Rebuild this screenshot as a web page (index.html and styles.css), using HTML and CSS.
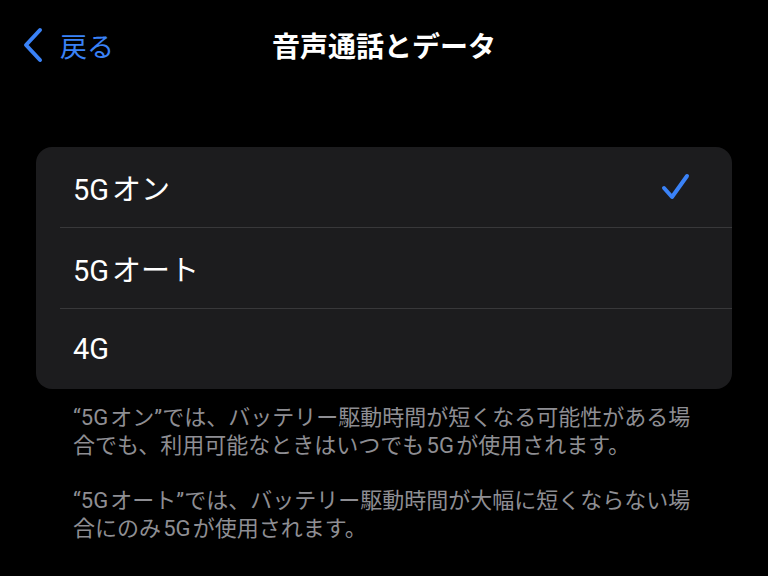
FILE: index.html
```html
<!DOCTYPE html>
<html lang="ja">
<head>
<meta charset="utf-8">
<title>音声通話とデータ</title>
<link rel="stylesheet" href="styles.css">
</head>
<body>
<header class="nav">
  <div class="back">
    <svg class="chev" width="22" height="36" viewBox="0 0 22 36"><path d="M18 3 L4 18 L18 33" fill="none" stroke="#3a82f7" stroke-width="4" stroke-linecap="round" stroke-linejoin="round"/></svg>
    <span class="back-label">戻る</span>
  </div>
  <h1 class="title">音声通話とデータ</h1>
  <div></div>
</header>
<main class="content">
  <section class="card">
    <div class="row"><span class="label">5G&#8202;オン</span>
      <svg class="check" width="30" height="28" viewBox="0 0 30 28"><path d="M3 15 L11 24 L26 3" fill="none" stroke="#3a82f7" stroke-width="4" stroke-linecap="round" stroke-linejoin="round"/></svg>
    </div>
    <div class="row"><span class="label">5G&#8202;オート</span></div>
    <div class="row"><span class="label">4G</span></div>
  </section>
  <div class="footer">
    <p>“5G&#8202;オン”では、バッテリー駆動時間が短くなる可能性がある場<br>合でも、利用可能なときはいつでも&#8202;5G&#8202;が使用されます。</p>
    <p>“5G&#8202;オート”では、バッテリー駆動時間が大幅に短くならない場<br>合にのみ&#8202;5G&#8202;が使用されます。</p>
  </div>
</main>
</body>
</html>
```

FILE: styles.css
```css
html, body {
  margin: 0;
  padding: 0;
  background: #000;
}
body {
  width: 768px;
  height: 576px;
  overflow: hidden;
  font-family: "Roboto", "Noto Sans CJK JP", sans-serif;
  color: #fff;
}
.nav {
  height: 90px;
  display: grid;
  grid-template-columns: 1fr auto 1fr;
  align-items: center;
}
.back {
  display: flex;
  align-items: center;
  gap: 16px;
  padding-left: 22px;
  color: #3a82f7;
}
.back-label {
  font-size: 27px;
}
.title {
  margin: 0;
  font-size: 28px;
  font-weight: 700;
  color: #fff;
}
.content {
  padding-top: 57px;
}
.card {
  margin: 0 36px;
  background: #1c1c1e;
  border-radius: 16px;
  overflow: hidden;
}
.row {
  height: 80px;
  margin-left: 24px;
  padding-left: 13px;
  padding-right: 41px;
  display: flex;
  align-items: center;
  justify-content: space-between;
  border-bottom: 1px solid #38383a;
}
.row:last-child {
  border-bottom: none;
}
.label {
  font-size: 29px;
}
.footer {
  padding: 15px 40px 0 73px;
  color: #8e8e93;
  font-size: 22px;
  line-height: 28px;
}
.footer p {
  margin: 0 0 27px;
}
```
